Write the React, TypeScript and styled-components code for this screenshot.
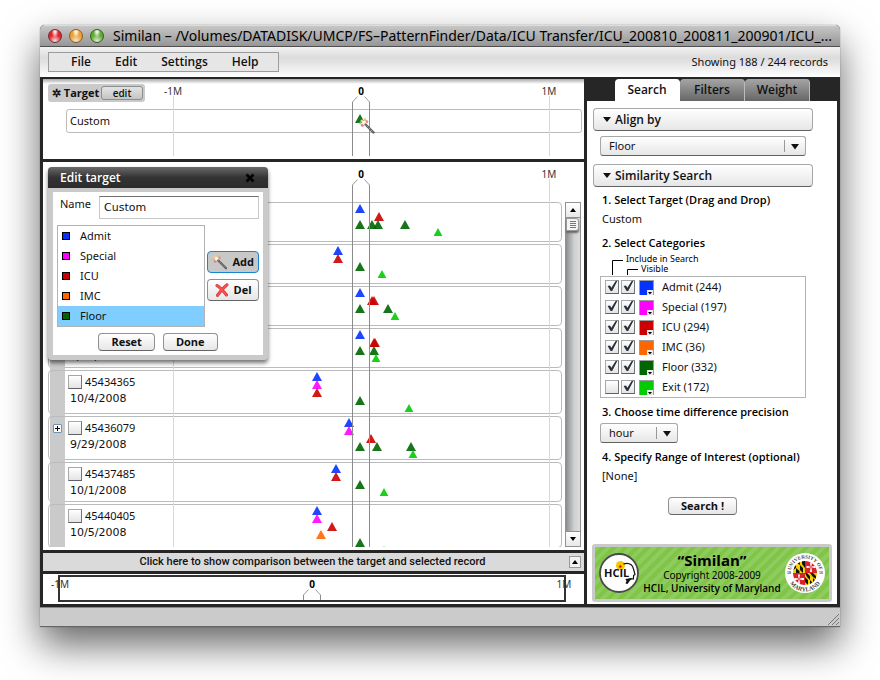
import React from "react";
import styled, { createGlobalStyle } from "styled-components";

const GlobalStyle = createGlobalStyle`
  * { box-sizing: border-box; }
  body {
    margin: 0;
    background: #fff;
    color: #111;
    font: 11px/16px "Noto Sans", "Open Sans", sans-serif;
    overflow: hidden;
  }
  button, input, select { font: inherit; color: inherit; margin: 0; }
`;

const ink = "#262626";
const strongFace = `"Open Sans", "Noto Sans", sans-serif`;

/* ---------- data ---------- */

type Category = { name: string; color: string; count: number; included: boolean };

const categories: Category[] = [
  { name: "Admit", color: "#0433ff", count: 244, included: true },
  { name: "Special", color: "#ff00ff", count: 197, included: true },
  { name: "ICU", color: "#cc0000", count: 294, included: true },
  { name: "IMC", color: "#ff6600", count: 36, included: true },
  { name: "Floor", color: "#006600", count: 332, included: true },
  { name: "Exit", color: "#00cc00", count: 172, included: false },
];

const [ADMIT, SPECIAL, ICU, IMC, FLOOR, EXIT] = categories.map((c) => c.color);

type Lane = [string, number[]];
type PatientRecord = {
  id?: string;
  date?: string;
  tall?: boolean;
  expandable?: boolean;
  lanes: Lane[];
};

const records: PatientRecord[] = [
  { lanes: [[ADMIT, [-1]], [ICU, [18]], [FLOOR, [-1, 11, 17, 44]], [EXIT, [77]]] },
  { lanes: [[ADMIT, [-23]], [ICU, [-23]], [FLOOR, [-1]], [EXIT, [21]]] },
  { lanes: [[ADMIT, [-1]], [ICU, [11, 13]], [FLOOR, [-1, 27]], [EXIT, [34]]] },
  { date: "9/26/2008", lanes: [[ADMIT, [-1]], [ICU, [13, 14]], [FLOOR, [-1, 13]], [EXIT, [15]]] },
  { id: "45434365", date: "10/4/2008", tall: true, lanes: [[ADMIT, [-44]], [SPECIAL, [-44]], [ICU, [-44]], [FLOOR, [-1]], [EXIT, [48]]] },
  { id: "45436079", date: "9/29/2008", tall: true, expandable: true, lanes: [[ADMIT, [-12]], [SPECIAL, [-12]], [ICU, [10]], [FLOOR, [-1, 16, 50]], [EXIT, [52]]] },
  { id: "45437485", date: "10/1/2008", lanes: [[ADMIT, [-25]], [ICU, [-25]], [FLOOR, [-1]], [EXIT, [23]]] },
  { id: "45440405", date: "10/5/2008", tall: true, lanes: [[ADMIT, [-44]], [SPECIAL, [-44]], [ICU, [-29]], [IMC, [-40]], [FLOOR, [-1]], [EXIT, [23]]] },
];

/* ---------- window frame ---------- */

const Page = styled.div`
  height: 100vh;
  padding: 25px 40px 53px;
  display: flex;
`;

const Window = styled.main`
  flex: 1;
  min-width: 0;
  display: flex;
  flex-direction: column;
  border-radius: 5px 5px 0 0;
  background: ${ink};
  box-shadow: 0 0 1px rgba(0, 0, 0, 0.7), 0 18px 38px rgba(0, 0, 0, 0.6);
`;

const TitleBar = styled.header`
  height: 22px;
  display: flex;
  align-items: center;
  gap: 7px;
  padding: 0 3px 0 8px;
  border-radius: 5px 5px 0 0;
  border-top: 1px solid #ddd;
  border-bottom: 1px solid #4f4f4f;
  background: linear-gradient(#c6c6c6, #969696);
`;

const Light = styled.button<{ $tone: string; $edge: string }>`
  flex: none;
  width: 14px;
  height: 14px;
  padding: 0;
  border: 1px solid ${(p) => p.$edge};
  border-radius: 50%;
  background: radial-gradient(ellipse at 50% 15%, #fff 0, #fff8 22%, transparent 40%),
    radial-gradient(circle at 50% 90%, #fffb 0, ${(p) => p.$tone} 50%);
`;

const Title = styled.h1`
  margin: 0 0 0 2px;
  font-size: 14px;
  line-height: 20px;
  font-weight: 400;
  color: #000;
  white-space: nowrap;
`;

const Toolbar = styled.div`
  height: 30px;
  display: flex;
  align-items: center;
  justify-content: space-between;
  padding: 0 12px 0 8px;
  background: linear-gradient(#f2f2f2, #dcdcdc 35%, #e2e2e2 50%, #fff);
`;

const Menu = styled.nav`
  height: 20px;
  display: flex;
  align-items: center;
  gap: 24px;
  padding: 0 20px 0 22px;
  border: 1px solid #9a9c9e;
  background: #e6e6e6;
`;

const MenuItem = styled.button`
  padding: 0;
  border: 0;
  background: none;
  font-family: ${strongFace};
  font-size: 12px;
  font-weight: 600;
`;

const Workspace = styled.div`
  flex: 1;
  min-height: 0;
  display: grid;
  grid-template-columns: minmax(0, 1fr) 250px;
  gap: 3px;
  padding: 2px 3px 3px;
`;

const StatusBar = styled.footer`
  height: 20px;
  display: flex;
  align-items: flex-end;
  justify-content: flex-end;
  padding: 1px;
  border-top: 1px solid #888;
  border-bottom: 1px solid #666;
  background: #cbcbcb;
`;

/* ---------- shared controls ---------- */

const Button = styled.button<{ $active?: boolean }>`
  height: ${(p) => (p.$active === undefined ? 18 : 22)}px;
  display: flex;
  align-items: center;
  justify-content: center;
  gap: 5px;
  padding: 0 ${(p) => (p.$active === undefined ? 12 : 4)}px;
  border: 1px solid ${(p) => (p.$active ? "#1686d0" : "#8f9193")};
  border-bottom-color: ${(p) => (p.$active ? "#1686d0" : "#666")};
  border-radius: 4px;
  background: ${(p) => (p.$active ? "#c8c8c8" : "linear-gradient(#fff, #e6e6e6)")};
  font-family: ${strongFace};
  font-weight: 700;
  line-height: 16px;
`;

const Box = styled.span`
  flex: none;
  width: 14px;
  height: 14px;
  display: grid;
  & > * { grid-area: 1 / 1; }
  svg { pointer-events: none; overflow: visible; }
`;

const BoxInput = styled.input`
  appearance: none;
  width: 14px;
  height: 14px;
  border: 1px solid #a5a7a9;
  border-right-color: #737577;
  border-bottom-color: #5f6163;
  background: linear-gradient(#fff, #e4e4e4);
`;

function Check({ label, on = false }: { label: string; on?: boolean }) {
  return (
    <Box>
      <BoxInput type="checkbox" aria-label={label} defaultChecked={on} />
      {on && (
        <svg width="14" height="14" viewBox="0 0 14 14" aria-hidden="true">
          <path d="M2.6 6L5 5.6L6.4 7.8L10.6 1L12.6 0.4L7.2 11L5.6 11Z" fill="#2b333c" />
        </svg>
      )}
    </Box>
  );
}

const SelectFrame = styled.span<{ $width: string; $below?: boolean }>`
  width: ${(p) => p.$width};
  height: 20px;
  display: grid;
  align-items: center;
  margin-top: ${(p) => (p.$below ? 3 : 0)}px;
  & > * { grid-area: 1 / 1; }
  svg { justify-self: end; pointer-events: none; }
`;

const SelectInput = styled.select`
  appearance: none;
  width: 100%;
  height: 20px;
  padding: 0 28px 1px 8px;
  border: 1px solid #a5a7a9;
  border-bottom-color: #5f6163;
  border-radius: 3px;
  background: linear-gradient(#fff, #e6e6e6);
  line-height: 16px;
`;

type SelectProps = { label: string; options: string[]; width: string; below?: boolean };

function Select({ label, options, width, below }: SelectProps) {
  return (
    <SelectFrame $width={width} $below={below}>
      <SelectInput aria-label={label}>
        {options.map((o) => <option key={o}>{o}</option>)}
      </SelectInput>
      <svg width="22" height="14" viewBox="0 0 22 14" aria-hidden="true">
        <path d="M0.5 1V13" stroke="#999" />
        <path d="M7 5H15L11 10.5Z" fill="#111" />
      </svg>
    </SelectFrame>
  );
}

/* ---------- timeline ---------- */

const Left = styled.div`
  min-width: 0;
  min-height: 0;
  display: flex;
  flex-direction: column;
  gap: 3px;
`;

const Track = styled.div<{ $labels: number }>`
  position: absolute;
  top: ${(p) => p.$labels}px;
  bottom: 3px;
  left: 130px;
  right: 35px;
`;

const Tick = styled.span<{ $at: number; $strong?: boolean }>`
  position: absolute;
  left: ${(p) => p.$at}%;
  transform: translateX(-50%);
  font-size: 10px;
  line-height: 12px;
  color: ${(p) => (p.$strong ? "#000" : "#333")};
  font-weight: ${(p) => (p.$strong ? 700 : 400)};
`;

const GridLine = styled.i<{ $at: number }>`
  position: absolute;
  left: ${(p) => p.$at}%;
  top: 11px;
  bottom: 0;
  width: 1px;
  background: #d8d8d8;
`;

const ZeroBand = styled.i`
  position: absolute;
  left: calc(50% - 9px);
  top: 17px;
  bottom: 0;
  width: 18px;
  border: solid #8c8c8c;
  border-width: 0 1px;
`;

const Peak = styled.svg`
  position: absolute;
  left: calc(50% - 9px);
  top: 11px;
`;

function PeakMark() {
  return (
    <Peak width="18" height="6" viewBox="0 0 18 6" aria-hidden="true">
      <path d="M0.5 6L5.5 0.5M17.5 6L12.5 0.5" fill="none" stroke="#9a9a9a" />
    </Peak>
  );
}

function Axis({ labels }: { labels: number }) {
  return (
    <Track $labels={labels}>
      <GridLine $at={0} />
      <GridLine $at={100} />
      <ZeroBand />
      <PeakMark />
      <Tick $at={0}>-1M</Tick>
      <Tick $at={50} $strong>0</Tick>
      <Tick $at={100}>1M</Tick>
    </Track>
  );
}

const Marks = styled.svg`
  display: block;
  width: 100%;
  height: 100%;
  overflow: visible;
`;

/* Each lane holds one category; offsets are distances from the alignment point. */
function Events({ lanes, top = 1 }: { lanes: Lane[]; top?: number }) {
  return (
    <Marks aria-hidden="true">
      {lanes.flatMap(([color, offsets], lane) =>
        offsets.map((offset, i) => (
          <svg key={`${lane}-${i}`} x={`${50 + (offset / 376) * 100}%`} y={top + lane * 8} overflow="visible">
            <path d={color === EXIT ? "M0 0L4.4 8H-4.4Z" : "M0 0L5 9H-5Z"} fill={color} opacity="0.9" />
          </svg>
        )),
      )}
    </Marks>
  );
}

const TargetPanel = styled.section`
  position: relative;
  height: 80px;
  padding: 5px 2px 0 5px;
  background: linear-gradient(#aaa, #fff 5px);
`;

const TargetTag = styled.div`
  width: 97px;
  height: 18px;
  display: flex;
  align-items: center;
  justify-content: space-between;
  padding: 0 2px 0 4px;
  border-radius: 3px;
  background: #cacaca;
  font-family: ${strongFace};
  font-weight: 700;
  white-space: nowrap;
`;

const EditButton = styled.button`
  width: 42px;
  height: 14px;
  padding: 0;
  border: 1px solid #8b8d8f;
  border-radius: 3px;
  background: linear-gradient(#e4e4e4, #c4c4c4);
  font-size: 10px;
  line-height: 11px;
  font-weight: 600;
`;

const TargetRow = styled.div`
  height: 24px;
  display: grid;
  grid-template-columns: 106px minmax(0, 1fr) 32px;
  align-items: center;
  margin: 7px 0 0 18px;
  border: 1px solid #b9bbbd;
  border-radius: 3px;
`;

const TargetName = styled.span`
  padding-left: 3px;
`;

const TargetTrack = styled.div`
  position: relative;
  height: 22px;
`;

const WandCursor = styled.span`
  position: absolute;
  left: calc(50% - 2px);
  top: 8px;
`;

const RecordsPanel = styled.section`
  position: relative;
  flex: 1;
  min-height: 0;
  display: flex;
  gap: 3px;
  padding: 40px 3px 3px 5px;
  background: #fff;
`;

const RecordList = styled.div`
  flex: 1;
  min-width: 0;
  overflow: hidden;
  display: flex;
  flex-direction: column;
  gap: 2px;
`;

const RecordRow = styled.article<{ $tall?: boolean }>`
  flex: none;
  height: ${(p) => (p.$tall ? 44 : 40)}px;
  display: grid;
  grid-template-columns: 15px 108px minmax(0, 1fr) 12px;
  padding-left: 1px;
  border: 1px solid #b9bbbd;
  border-radius: 4px;
`;

const Handle = styled.div`
  display: flex;
  align-items: flex-start;
  justify-content: center;
  margin: 1px 0;
  padding-top: 6px;
  border-radius: 3px;
  background: #cacaca;
`;

const Expander = styled.button`
  width: 9px;
  height: 9px;
  display: flex;
  padding: 0;
  border: 1px solid #6f93b3;
  border-radius: 1px;
  background: #fff;
`;

const RecordInfo = styled.div`
  padding: 3px 0 0 3px;
`;

const RecordId = styled.label`
  height: 16px;
  display: flex;
  align-items: center;
  gap: 3px;
`;

const RecordDate = styled.time`
  display: block;
  padding: 1px 0 0 2px;
  font-family: "DejaVu Sans", sans-serif;
`;

const Scrollbar = styled.div`
  width: 16px;
  display: flex;
  flex-direction: column;
  border: 1px solid #8f9193;
  background: linear-gradient(90deg, #8b8e90, #cfd1d2 60%, #ddd);
`;

const ScrollButton = styled.button<{ $foot?: boolean }>`
  height: 15px;
  display: grid;
  place-items: center;
  padding: 0;
  border: solid #8f9193;
  border-width: ${(p) => (p.$foot ? "1px 0 0" : "0 0 1px")};
  background: linear-gradient(#fff, #e8e8e8);
  margin-top: ${(p) => (p.$foot ? "auto" : "0")};
`;

const ScrollThumb = styled.div`
  width: 13px;
  height: 13px;
  display: grid;
  place-items: center;
  border: 1px solid #999;
  border-radius: 0 3px 3px 0;
  background: #f3f3f3;
  box-shadow: 0 2px 2px #666;
`;

function Arrow({ up = false }: { up?: boolean }) {
  return (
    <svg width="6" height="4" viewBox="0 0 6 4" aria-hidden="true">
      <path d={up ? "M3 0L6 4H0Z" : "M0 0H6L3 4Z"} fill="#000" />
    </svg>
  );
}

const CompareBar = styled.button`
  height: 18px;
  display: grid;
  grid-template-columns: 1fr auto;
  align-items: center;
  padding: 0 3px 0 13px;
  border: 0;
  background: #dadada;
  font-family: Roboto, sans-serif;
  font-weight: 500;
  color: #111;
  line-height: 16px;
`;

const CompareArrow = styled.span`
  width: 12px;
  height: 12px;
  display: grid;
  place-items: center;
  border: 1px solid #999;
  background: #f2f2f2;
`;

const Navigator = styled.section`
  height: 30px;
  padding: 1px 18px 2px 15px;
  background: #fff;
`;

const NavRange = styled.div`
  position: relative;
  height: 27px;
  border: 2px solid #333;
`;

const NavMarks = styled.div`
  position: absolute;
  inset: 1px 0 0 0;
`;

/* ---------- edit dialog ---------- */

const Dialog = styled.form`
  position: absolute;
  top: 5px;
  left: 5px;
  width: 220px;
  border: solid #cacaca;
  border-width: 0 5px 5px;
  border-radius: 4px;
  background: #fff;
  box-shadow: 0 3px 4px rgba(0, 0, 0, 0.55);
`;

const DialogHead = styled.div`
  height: 21px;
  display: flex;
  align-items: center;
  justify-content: space-between;
  margin: 0 -5px;
  padding: 0 13px 0 12px;
  border-radius: 4px 4px 0 0;
  background: linear-gradient(#6a6a6a, #333 50%, #2c2c2c);
  color: #fff;
  font-family: ${strongFace};
  font-size: 12px;
  font-weight: 600;
`;

const CloseButton = styled.button`
  width: 10px;
  height: 10px;
  display: grid;
  place-items: center;
  padding: 0;
  border: 0;
  background: none;
`;

const DialogBody = styled.div`
  display: grid;
  grid-template-columns: 148px 52px;
  gap: 6px 2px;
  padding: 4px 4px 4px;
  border-top: 4px solid #cacaca;
`;

const NameField = styled.label`
  grid-column: 1 / -1;
  display: flex;
  justify-content: space-between;
  padding-left: 3px;
`;

const NameInput = styled.input`
  width: 160px;
  height: 23px;
  padding: 0 4px;
  border: 1px solid #c6c8ca;
  border-top-color: #6f7173;
  border-radius: 0;
  background: #fff;
  font-family: "DejaVu Sans", sans-serif;
`;

const CategoryPick = styled.ul`
  margin: 0;
  padding: 0;
  list-style: none;
  border: 1px solid #b1b3b5;
`;

const PickItem = styled.li<{ $on?: boolean }>`
  height: 20px;
  display: flex;
  align-items: center;
  gap: 10px;
  padding: 0 0 1px 4px;
  background: ${(p) => (p.$on ? "#7fceff" : "#fff")};
`;

const PickSwatch = styled.i<{ $color: string }>`
  width: 8px;
  height: 8px;
  border: 1px solid #000;
  background: ${(p) => p.$color};
`;

const PickActions = styled.div`
  display: flex;
  flex-direction: column;
  justify-content: center;
  gap: 6px;
`;

const DialogFoot = styled.div`
  grid-column: 1 / -1;
  display: flex;
  justify-content: center;
  gap: 8px;
`;

function Wand() {
  return (
    <svg width="16" height="16" viewBox="0 0 16 16" aria-hidden="true">
      <circle cx="3" cy="3" r="1.6" fill="#f3c9a0" />
      <circle cx="6" cy="1.6" r="1.3" fill="#b9dd7c" />
      <circle cx="1.4" cy="5.4" r="1.2" fill="#a6d8a0" />
      <circle cx="7.6" cy="3.6" r="1.6" fill="#ef8c8c" />
      <circle cx="3.4" cy="7.2" r="1.5" fill="#ee7b7b" />
      <circle cx="5" cy="4.8" r="2" fill="#fff8e8" />
      <path d="M6.5 6.5L14.5 14.5" stroke="#5b5b5b" strokeWidth="2.4" strokeLinecap="round" />
      <path d="M6.5 6.5L14 14" stroke="#b9b9b9" strokeWidth="0.8" strokeDasharray="1.5 1" />
    </svg>
  );
}

function RedCross() {
  return (
    <svg width="14" height="14" viewBox="0 0 14 14" aria-hidden="true">
      <path d="M2 2.5Q6 5 11.5 12M12 1.8Q7 5.5 2.5 12.4" fill="none" stroke="#c33" strokeWidth="3" strokeLinecap="round" />
      <path d="M2 2.5Q6 5 11.5 12M12 1.8Q7 5.5 2.5 12.4" fill="none" stroke="#ff5050" strokeWidth="1.8" strokeLinecap="round" />
    </svg>
  );
}

function EditDialog() {
  return (
    <Dialog onSubmit={(e: React.FormEvent) => e.preventDefault()}>
      <DialogHead>
        Edit target
        <CloseButton type="button" aria-label="Close">
          <svg width="10" height="10" viewBox="0 0 10 10" aria-hidden="true">
            <path d="M1.5 1.5L8.5 8.5M8.5 1.5L1.5 8.5" stroke="#000" strokeWidth="2.6" />
          </svg>
        </CloseButton>
      </DialogHead>
      <DialogBody>
        <NameField>
          Name
          <NameInput defaultValue="Custom" />
        </NameField>
        <CategoryPick>
          {categories.slice(0, 5).map((c) => (
            <PickItem key={c.name} $on={c.name === "Floor"}>
              <PickSwatch $color={c.color} />
              {c.name}
            </PickItem>
          ))}
        </CategoryPick>
        <PickActions>
          <Button type="button" $active><Wand />Add</Button>
          <Button type="button" $active={false}><RedCross />Del</Button>
        </PickActions>
        <DialogFoot>
          <Button type="reset">Reset</Button>
          <Button type="submit">Done</Button>
        </DialogFoot>
      </DialogBody>
    </Dialog>
  );
}

/* ---------- search panel ---------- */

const Right = styled.aside`
  min-height: 0;
  display: flex;
  flex-direction: column;
`;

const Tabs = styled.div`
  height: 22px;
  display: flex;
  padding-left: 28px;
`;

const Tab = styled.button<{ $on?: boolean }>`
  width: 65px;
  padding: 0;
  border: 0;
  border-right: 1px solid ${(p) => (p.$on ? "#fff" : "#bbb")};
  border-radius: 4px 4px 0 0;
  background: ${(p) => (p.$on ? "#fff" : "linear-gradient(#a5a5a5, #666)")};
  font-family: ${strongFace};
  font-size: 12px;
  font-weight: 600;
`;

const SearchPanel = styled.section`
  flex: 1;
  min-height: 0;
  display: flex;
  flex-direction: column;
  padding: 7px 5px 2px;
  background: #fff;
`;

const SectionHead = styled.button`
  width: 220px;
  height: 23px;
  display: flex;
  align-items: center;
  gap: 4px;
  margin-left: 1px;
  padding: 0 9px;
  border: 1px solid #a5a7a9;
  border-bottom-color: #5f6163;
  border-radius: 4px;
  background: linear-gradient(#fff, #e6e6e6);
  font-family: ${strongFace};
  font-size: 12px;
  font-weight: 600;
`;

const Indent = styled.div`
  display: flex;
  padding: 5px 26px 8px 8px;
`;

const Steps = styled.div`
  display: flex;
  flex-direction: column;
  align-items: flex-start;
  padding: 5px 26px 0 8px;
`;

const StepTitle = styled.h2<{ $gap?: boolean }>`
  margin: ${(p) => (p.$gap ? 6 : 0)}px 0 0 2px;
  font-family: ${strongFace};
  font-size: 11px;
  line-height: 16px;
  font-weight: 600;
  color: #000;
  white-space: nowrap;
`;

const StepText = styled.p`
  margin: 3px 0 2px 2px;
`;

const Legend = styled.div`
  height: 22px;
  display: grid;
  align-items: start;
  margin: 3px 0 0 12px;
  color: #000;
  font-size: 9px;
  line-height: 10px;
  & > * { grid-area: 1 / 1; }
`;

const LegendLines = styled.svg`
  align-self: end;
`;

const LegendText = styled.span<{ $indent: number }>`
  display: block;
  padding-left: ${(p) => p.$indent}px;
`;

const CategoryTable = styled.ul`
  width: 206px;
  margin: 0;
  padding: 0 4px;
  list-style: none;
  border: 1px solid #b1b3b5;
`;

const CategoryRow = styled.li`
  height: 20px;
  display: flex;
  align-items: center;
  gap: 2px;
`;

const ColorButton = styled.button<{ $color: string }>`
  width: 15px;
  height: 15px;
  display: flex;
  align-items: flex-end;
  justify-content: flex-end;
  margin: 0 6px 0 2px;
  padding: 0;
  border: solid #9a9c9e;
  border-width: 1px 1px 0 1px;
  background: ${(p) => p.$color};
`;

const SearchAction = styled.div`
  display: flex;
  justify-content: center;
  width: 205px;
  margin-top: 11px;
`;

const Banner = styled.div`
  height: 58px;
  display: flex;
  align-items: center;
  justify-content: space-between;
  margin-top: auto;
  padding: 0 4px;
  border: 3px solid #cacaca;
  border-radius: 3px;
  background: repeating-linear-gradient(135deg, #8fcc60 0 4px, #80c548 4px 8px);
  color: #000;
  text-align: center;
  white-space: nowrap;
  font-size: 10px;
  line-height: 13px;
`;

const BannerName = styled.strong`
  display: block;
  font-family: ${strongFace};
  font-size: 15px;
  line-height: 18px;
`;

const BannerOrg = styled.strong`
  font-family: ${strongFace};
  font-weight: 600;
`;

function HcilLogo() {
  return (
    <svg width="40" height="40" viewBox="0 0 40 40" role="img" aria-label="HCIL">
      <circle cx="20" cy="20" r="19" fill="#fff" stroke="#4a4a4a" strokeWidth="1.8" />
      <circle cx="21.5" cy="12.5" r="4.5" fill="#f6c800" />
      <path d="M24.5 10.8Q33 9 34.5 16L36 21.5L34.6 22.5L34.4 26Q31.5 25.5 29 26.5" fill="none" stroke="#111" strokeWidth="1.2" />
      <path d="M26.5 26L33.5 25L31 27.5L28.5 31L26.5 30.6L27.5 28Z" fill="#111" />
      <text x="5" y="24" fontFamily="Open Sans" fontSize="11" fontWeight="700" fill="#111">HCIL</text>
      <circle cx="21.3" cy="13.6" r="1.4" fill="#e01f1f" />
    </svg>
  );
}

function MarylandSeal() {
  return (
    <svg width="40" height="40" viewBox="0 0 40 40" role="img" aria-label="University of Maryland">
      <defs>
        <path id="sealTop" d="M5.5 20A14.5 14.5 0 0 1 34.5 20" />
        <path id="sealFoot" d="M1.6 20A18.4 18.4 0 0 0 38.4 20" />
        <clipPath id="sealDisc"><circle cx="20" cy="20" r="12" /></clipPath>
      </defs>
      <circle cx="20" cy="20" r="20" fill="#fff" />
      <g clipPath="url(#sealDisc)">
        <rect width="20" height="20" fill="#f8d000" />
        <rect x="20" y="20" width="20" height="20" fill="#f8d000" />
        <rect x="20" width="20" height="20" fill="#d8232a" />
        <rect y="20" width="20" height="20" fill="#d8232a" />
        <path d="M8 13L11 11V15L8 17ZM11 15L14.5 18V20H11ZM12 9L15 7V12L12 10ZM15 12L18 15V20L15 17ZM17 6L20 8V15L17 11Z" fill="#111" />
        <path d="M20 24L23 27V32L20 29ZM20 20H22L25 23V27L22 24ZM25 27L28 30V33L25 32ZM25 20H28L31 23V26L28 24ZM28 25L31 28L28 30Z" fill="#111" />
        <path d="M26 9V19M21.5 14H31M14 21.5V31M9 26H19" stroke="#fff" strokeWidth="1.8" />
        <path d="M26 11.5V16.5M23.5 14H28.5M14 23.5V28.5M11.5 26H16.5" stroke="#d8232a" strokeWidth="0.8" />
      </g>
      <g fontFamily="Liberation Serif" fontSize="5" fontWeight="700" fill="#444" textAnchor="middle">
        <text><textPath href="#sealTop" startOffset="50%">UNIVERSITY OF</textPath></text>
        <text fontSize="6"><textPath href="#sealFoot" startOffset="50%">MARYLAND</textPath></text>
        <text x="4" y="21" fontSize="4">18</text>
        <text x="36" y="21" fontSize="4">56</text>
      </g>
    </svg>
  );
}

function Disclosure() {
  return (
    <svg width="8" height="5" viewBox="0 0 8 5" aria-hidden="true">
      <path d="M0 0H8L4 5Z" fill="#111" />
    </svg>
  );
}

export default function App() {
  return (
    <Page>
      <GlobalStyle />
      <Window>
        <TitleBar>
          <Light aria-label="Close window" $tone="#e0242e" $edge="#7c2a2c" />
          <Light aria-label="Minimize window" $tone="#f0a02c" $edge="#8c5a20" />
          <Light aria-label="Zoom window" $tone="#5fae30" $edge="#35601c" />
          <Title>
            Similan – /Volumes/DATADISK/UMCP/FS–PatternFinder/Data/ICU Transfer/ICU_200810_200811_200901/ICU_...
          </Title>
        </TitleBar>
        <Toolbar>
          <Menu>
            <MenuItem>File</MenuItem>
            <MenuItem>Edit</MenuItem>
            <MenuItem>Settings</MenuItem>
            <MenuItem>Help</MenuItem>
          </Menu>
          <span>Showing 188 / 244 records</span>
        </Toolbar>

        <Workspace>
          <Left>
            <TargetPanel>
              <Axis labels={6} />
              <TargetTag>
                <span>✲ Target</span>
                <EditButton>edit</EditButton>
              </TargetTag>
              <TargetRow>
                <TargetName>Custom</TargetName>
                <TargetTrack>
                  <Events lanes={[[FLOOR, [-1]]]} top={4} />
                  <WandCursor><Wand /></WandCursor>
                </TargetTrack>
              </TargetRow>
            </TargetPanel>

            <RecordsPanel>
              <Axis labels={6} />
              <RecordList>
                {records.map((r, i) => (
                  <RecordRow key={i} $tall={r.tall}>
                    <Handle>
                      {r.expandable && (
                        <Expander aria-label={`Expand ${r.id}`}>
                          <svg width="7" height="7" viewBox="0 0 7 7" aria-hidden="true">
                            <path d="M1 3.5H6M3.5 1V6" stroke="#000" />
                          </svg>
                        </Expander>
                      )}
                    </Handle>
                    <RecordInfo>
                      <RecordId>
                        <Check label={`Select record ${r.id ?? i + 1}`} />
                        {r.id}
                      </RecordId>
                      <RecordDate>{r.date}</RecordDate>
                    </RecordInfo>
                    <Events lanes={r.lanes} />
                  </RecordRow>
                ))}
              </RecordList>
              <Scrollbar>
                <ScrollButton aria-label="Scroll up"><Arrow up /></ScrollButton>
                <ScrollThumb>
                  <svg width="6" height="8" viewBox="0 0 6 8" aria-hidden="true">
                    <path d="M0 0.5H6M0 2.5H6M0 4.5H6M0 6.5H6" stroke="#777" />
                  </svg>
                </ScrollThumb>
                <ScrollButton $foot aria-label="Scroll down"><Arrow /></ScrollButton>
              </Scrollbar>
              <EditDialog />
            </RecordsPanel>

            <CompareBar>
              Click here to show comparison between the target and selected record
              <CompareArrow><Arrow up /></CompareArrow>
            </CompareBar>

            <Navigator>
              <NavRange>
                <NavMarks>
                  <PeakMark />
                  <ZeroBand />
                  <Tick $at={0}>-1M</Tick>
                  <Tick $at={50} $strong>0</Tick>
                  <Tick $at={100}>1M</Tick>
                </NavMarks>
              </NavRange>
            </Navigator>
          </Left>

          <Right>
            <Tabs>
              <Tab $on>Search</Tab>
              <Tab>Filters</Tab>
              <Tab>Weight</Tab>
            </Tabs>
            <SearchPanel>
              <SectionHead><Disclosure />Align by</SectionHead>
              <Indent>
                <Select label="Align by" options={["Floor", "Admit", "ICU"]} width="206px" />
              </Indent>
              <SectionHead><Disclosure />Similarity Search</SectionHead>
              <Steps>
                <StepTitle>1. Select Target (Drag and Drop)</StepTitle>
                <StepText>Custom</StepText>
                <StepTitle $gap>2. Select Categories</StepTitle>
                <Legend>
                  <LegendLines width="26" height="16" viewBox="0 0 26 16" aria-hidden="true">
                    <path d="M0.5 15V0.5H11M15.5 15V9.5H26" fill="none" stroke="#000" />
                  </LegendLines>
                  <div>
                    <LegendText $indent={14}>Include in Search</LegendText>
                    <LegendText $indent={29}>Visible</LegendText>
                  </div>
                </Legend>
                <CategoryTable>
                  {categories.map((c) => (
                    <CategoryRow key={c.name}>
                      <Check label={`Include ${c.name} in search`} on={c.included} />
                      <Check label={`Show ${c.name}`} on />
                      <ColorButton $color={c.color} aria-label={`${c.name} colour`}>
                        <svg width="6" height="5" viewBox="0 0 6 5" aria-hidden="true">
                          <path d="M0 0H6V5H0Z" fill="#eee" />
                          <path d="M1 2H5L3 4.5Z" fill="#000" />
                        </svg>
                      </ColorButton>
                      {c.name} ({c.count})
                    </CategoryRow>
                  ))}
                </CategoryTable>
                <StepTitle $gap>3. Choose time difference precision</StepTitle>
                <Select label="Time difference precision" options={["hour", "day"]} width="78px" below />
                <StepTitle $gap>4. Specify Range of Interest (optional)</StepTitle>
                <StepText>[None]</StepText>
                <SearchAction><Button>Search !</Button></SearchAction>
              </Steps>
              <Banner>
                <HcilLogo />
                <div>
                  <BannerName>“Similan”</BannerName>
                  Copyright 2008-2009<br />
                  <BannerOrg>HCIL, University of Maryland</BannerOrg>
                </div>
                <MarylandSeal />
              </Banner>
            </SearchPanel>
          </Right>
        </Workspace>

        <StatusBar>
          <svg width="11" height="11" viewBox="0 0 11 11" aria-hidden="true">
            <path d="M0 11L11 0M4 11L11 4M8 11L11 8" stroke="#777" />
          </svg>
        </StatusBar>
      </Window>
    </Page>
  );
}
